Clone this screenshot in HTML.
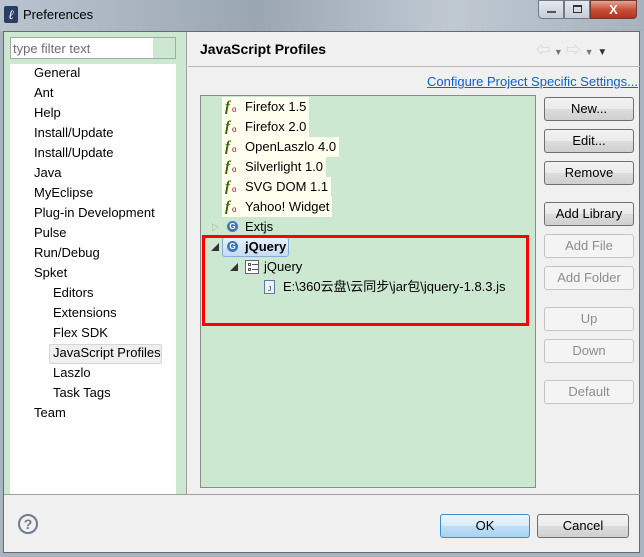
<!DOCTYPE html>
<html><head><meta charset="utf-8"><style>
*{margin:0;padding:0;box-sizing:border-box}
body{width:644px;height:557px;overflow:hidden;font-family:"Liberation Sans","Noto Sans CJK SC",sans-serif;font-size:13px;color:#000;background:#a9b4bf;position:relative}
.a{position:absolute}
.btn{position:absolute;left:544px;width:90px;height:24px;border:1px solid #707070;border-radius:3px;background:linear-gradient(#f2f2f2,#ebebeb 50%,#dddddd 51%,#cfcfcf);text-align:center;line-height:22px;font-size:13px}
.dis{border-color:#c5c5c5;background:#f4f4f4;color:#8d8d8d}
.li{position:absolute;white-space:nowrap;line-height:20px}
.fx{position:absolute;background:#fffff0;height:20px;line-height:20px;padding-left:23px;padding-right:3px;white-space:nowrap}
.fx i{position:absolute;left:3px;top:0;font-family:"Liberation Serif",serif;color:#3a6a00;font-weight:bold;font-size:15px}
.fx b{position:absolute;left:10px;top:3px;font-weight:normal;color:#a00;font-size:8px}
</style></head><body>
<div class="a" style="left:0;top:0;width:644px;height:31px;background:linear-gradient(90deg,#b9c4cf,#9aa6b2 40%,#c0c9d2 70%,#a6b2be)"></div>
<div class="a" style="left:4px;top:6px;width:14px;height:17px;background:#2a3e64;border-radius:2px;color:#fff;font-style:italic;font-size:13px;text-align:center;line-height:17px;font-family:'Liberation Serif',serif">ℓ</div>
<div class="a" style="left:23px;top:7px;font-size:13px">Preferences</div>
<div class="a" style="left:538px;top:0;width:26px;height:19px;border:1px solid #6d7a88;border-radius:0 0 0 4px;background:linear-gradient(#e6eaef,#c5ccd5)"><div class="a" style="left:8px;top:10px;width:9px;height:2px;background:#555"></div></div>
<div class="a" style="left:564px;top:0;width:26px;height:19px;border:1px solid #6d7a88;background:linear-gradient(#e6eaef,#c5ccd5)"><div class="a" style="left:8px;top:4px;width:9px;height:8px;border:1px solid #333;border-top-width:2px"></div></div>
<div class="a" style="left:590px;top:0;width:47px;height:19px;border:1px solid #6d3c33;border-radius:0 0 4px 0;background:linear-gradient(#e8a493,#c7503a 50%,#b2321c);color:#fff;font-weight:bold;text-align:center;line-height:17px;font-size:13px">X</div>
<div class="a" style="left:3px;top:31px;width:637px;height:522px;background:#f0f0f0;border:1px solid #6a6a6a"></div>
<div class="a" style="left:4px;top:32px;width:182px;height:462px;background:#cde8d0"></div>
<div class="a" style="left:186px;top:32px;width:1px;height:462px;background:#a0a0a0"></div>
<div class="a" style="left:10px;top:37px;width:166px;height:22px;border:1px solid #a8a8a8;background:#fff"><div class="a" style="right:0;top:0;width:22px;height:20px;background:#cde8d0"></div><span class="a" style="left:2px;top:3px;color:#6d6d6d">type filter text</span></div>
<div class="a" style="left:10px;top:64px;width:166px;height:430px;background:#fff"></div>
<div class="li" style="left:34px;top:63px">General</div>
<div class="li" style="left:34px;top:83px">Ant</div>
<div class="li" style="left:34px;top:103px">Help</div>
<div class="li" style="left:34px;top:123px">Install/Update</div>
<div class="li" style="left:34px;top:143px">Install/Update</div>
<div class="li" style="left:34px;top:163px">Java</div>
<div class="li" style="left:34px;top:183px">MyEclipse</div>
<div class="li" style="left:34px;top:203px">Plug-in Development</div>
<div class="li" style="left:34px;top:223px">Pulse</div>
<div class="li" style="left:34px;top:243px">Run/Debug</div>
<div class="li" style="left:34px;top:263px">Spket</div>
<div class="li" style="left:53px;top:283px">Editors</div>
<div class="li" style="left:53px;top:303px">Extensions</div>
<div class="li" style="left:53px;top:323px">Flex SDK</div>
<div class="a" style="left:49px;top:344px;width:113px;height:20px;background:#efefef;border:1px solid #d6d6d6;border-radius:2px"></div>
<div class="li" style="left:53px;top:343px">JavaScript Profiles</div>
<div class="li" style="left:53px;top:363px">Laszlo</div>
<div class="li" style="left:53px;top:383px">Task Tags</div>
<div class="li" style="left:34px;top:403px">Team</div>
<div class="a" style="left:200px;top:41px;font-weight:bold;font-size:14px">JavaScript Profiles</div>
<div class="a" style="left:536px;top:40px;color:#ccc;font-size:14px">⇦ <span style="font-size:9px;color:#777">▼</span> ⇨ <span style="font-size:9px;color:#777">▼</span> <span style="font-size:10px;color:#333">▼</span></div>
<div class="a" style="left:188px;top:66px;width:452px;height:1px;background:#b8b8b8"></div>
<div class="a" style="left:427px;top:74px;color:#0f5fd6;text-decoration:underline">Configure Project Specific Settings...</div>
<div class="a" style="left:200px;top:95px;width:336px;height:393px;background:#cde8d0;border:1px solid #8c8c8c"></div>
<div class="fx" style="left:222px;top:97px"><i>f</i><b>o</b>Firefox 1.5</div>
<div class="fx" style="left:222px;top:117px"><i>f</i><b>o</b>Firefox 2.0</div>
<div class="fx" style="left:222px;top:137px"><i>f</i><b>o</b>OpenLaszlo 4.0</div>
<div class="fx" style="left:222px;top:157px"><i>f</i><b>o</b>Silverlight 1.0</div>
<div class="fx" style="left:222px;top:177px"><i>f</i><b>o</b>SVG DOM 1.1</div>
<div class="fx" style="left:222px;top:197px"><i>f</i><b>o</b>Yahoo! Widget</div>
<div class="a" style="left:211px;top:222px;font-size:8px;color:#999">▷</div>
<div class="a" style="left:227px;top:221px;width:11px;height:11px;border-radius:50%;background:#3a79c0;color:#fff;font-size:8px;font-weight:bold;text-align:center;line-height:11px">G</div>
<div class="li" style="left:245px;top:217px">Extjs</div>
<div class="a" style="left:222px;top:237px;width:67px;height:20px;border:1px solid #84acdd;border-radius:3px;background:linear-gradient(#e6f0fb,#c6dcf5)"></div>
<div class="a" style="left:211px;top:242px;font-size:8px;color:#333">◢</div>
<div class="a" style="left:227px;top:241px;width:11px;height:11px;border-radius:50%;background:#3a79c0;color:#fff;font-size:8px;font-weight:bold;text-align:center;line-height:11px">G</div>
<div class="li" style="left:245px;top:237px;font-weight:bold">jQuery</div>
<div class="a" style="left:230px;top:262px;font-size:8px;color:#333">◢</div>
<div class="a" style="left:245px;top:260px;width:14px;height:14px;border:1px solid #667;background:#fff"><div class="a" style="left:6px;top:3px;width:6px;height:1px;background:#555"></div><div class="a" style="left:6px;top:8px;width:6px;height:1px;background:#555"></div><div class="a" style="left:2px;top:2px;width:3px;height:3px;border:1px solid #555"></div><div class="a" style="left:2px;top:7px;width:3px;height:3px;border:1px solid #555"></div></div>
<div class="li" style="left:264px;top:257px">jQuery</div>
<div class="a" style="left:264px;top:280px;width:11px;height:14px;border:1px solid #5a78a8;background:#eef3fb;font-size:7px;color:#234;text-align:center;line-height:18px">J</div>
<div class="li" style="left:283px;top:277px">E:\360云盘\云同步\jar包\jquery-1.8.3.js</div>
<div class="a" style="left:202px;top:235px;width:327px;height:91px;border:3px solid #f00"></div>
<div class="btn" style="top:97px">New...</div>
<div class="btn" style="top:129px">Edit...</div>
<div class="btn" style="top:161px">Remove</div>
<div class="btn" style="top:202px">Add Library</div>
<div class="btn dis" style="top:234px">Add File</div>
<div class="btn dis" style="top:266px">Add Folder</div>
<div class="btn dis" style="top:307px">Up</div>
<div class="btn dis" style="top:339px">Down</div>
<div class="btn dis" style="top:380px">Default</div>
<div class="a" style="left:4px;top:494px;width:636px;height:1px;background:#a0a0a0"></div>
<div class="a" style="left:18px;top:514px;width:20px;height:20px;border:2px solid #6d7a90;border-radius:50%;text-align:center;line-height:16px;font-weight:bold;color:#6d7a90;font-size:14px">?</div>
<div class="btn" style="left:440px;top:514px;width:90px;height:24px;border-color:#3c8fc9;background:linear-gradient(#eaf5fc,#d9ecf8 50%,#bedff5 51%,#a9d3f0)">OK</div>
<div class="btn" style="left:537px;top:514px;width:92px;height:24px">Cancel</div>
</body></html>
